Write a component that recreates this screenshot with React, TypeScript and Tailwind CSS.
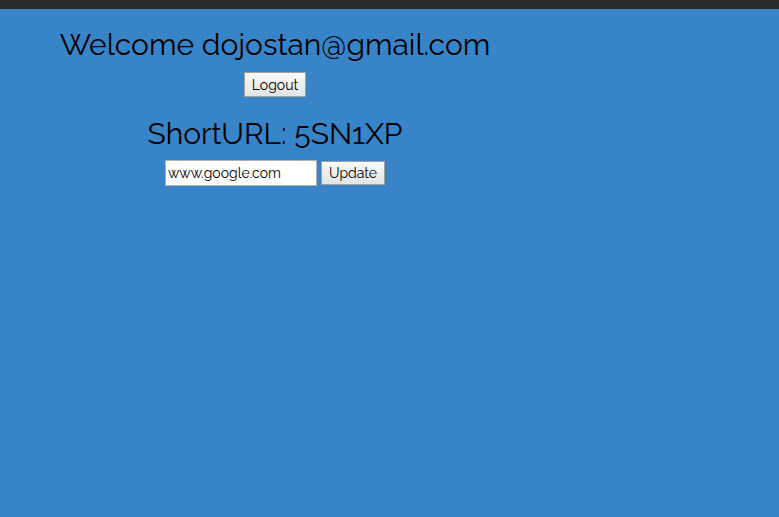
import React from 'react';

const font = { fontFamily: 'Raleway, Lato, "Open Sans", sans-serif' };

export default function App() {
  return (
    <div className="min-h-[517px] w-full bg-[#3784c9] text-black" style={font}>
      <div className="h-[9px] bg-[#2b2b2b]" />
      <div className="w-[550px] text-center">
        <h1 className="mt-[18px] text-[30px] leading-[36px]">Welcome dojostan@gmail.com</h1>
        <button className="mt-[9px] h-[25px] border border-[#a0a0a0] bg-gradient-to-b from-[#fafafa] to-[#e4e4e4] px-[7px] text-[14px] leading-none">
          Logout
        </button>
        <h2 className="mt-[19px] text-[30px] leading-[36px]">ShortURL: 5SN1XP</h2>
        <div className="mt-[8px] flex items-center justify-center gap-[4px]">
          <input
            defaultValue="www.google.com"
            className="h-[26px] w-[152px] border border-[#b0b0b0] bg-white px-[2px] text-[14px] outline-none"
          />
          <button className="h-[24px] border border-[#a0a0a0] bg-gradient-to-b from-[#fafafa] to-[#e4e4e4] px-[7px] text-[14px] leading-none">
            Update
          </button>
        </div>
      </div>
    </div>
  );
}
